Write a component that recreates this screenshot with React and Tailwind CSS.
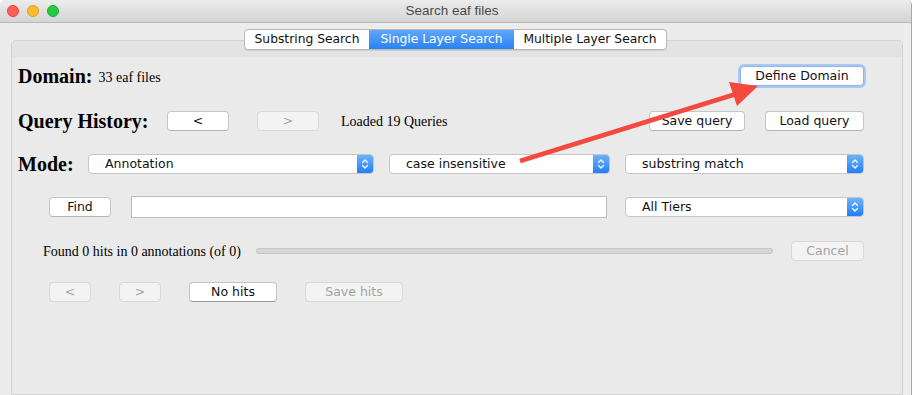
import React from 'react';

const ui = { fontFamily: '"DejaVu Sans", "Noto Sans", sans-serif' };
const serif = { fontFamily: '"Liberation Serif", "Times New Roman", serif' };

function Btn({ children, w, disabled, strong, focus, ml }) {
    let cls = 'h-[20px] flex items-center justify-center rounded-[4px] text-[12.5px] ';
    if (focus) {
        cls += 'bg-white border border-[#8fb6ec] ring-2 ring-[#a9c9f3] text-[#111]';
    } else if (disabled) {
        cls += 'bg-[#f3f3f3] border border-[#d7d7d7] text-[#a3a3a3]';
    } else if (strong) {
        cls += 'bg-white border border-[#c3c3c3] border-b-[#9d9d9d] text-[#111]';
    } else {
        cls += 'bg-white border border-[#c6c6c6] border-b-[#b5b5b5] text-[#111]';
    }
    return (
        <div className={`${cls} shrink-0`} style={{ ...ui, width: w, marginLeft: ml }}>
            {children}
        </div>
    );
}

function Chevrons() {
    return (
        <svg width="8" height="12" viewBox="0 0 8 12">
            <path d="M1.5 4.5 L4 2 L6.5 4.5" fill="none" stroke="white" strokeWidth="1.3" strokeLinecap="round" strokeLinejoin="round" />
            <path d="M1.5 7.5 L4 10 L6.5 7.5" fill="none" stroke="white" strokeWidth="1.3" strokeLinecap="round" strokeLinejoin="round" />
        </svg>
    );
}

function Select({ label, w, ml }) {
    return (
        <div
            className="h-[20px] flex items-stretch rounded-[4px] border border-[#c6c6c6] bg-white shrink-0 overflow-hidden"
            style={{ width: w, marginLeft: ml }}
        >
            <div className="flex-1 flex items-center pl-[16px] text-[12.5px] text-[#111]" style={ui}>{label}</div>
            <div className="w-[16px] flex items-center justify-center bg-gradient-to-b from-[#6cb2fb] to-[#1b7ff7]">
                <Chevrons />
            </div>
        </div>
    );
}

export default function App() {
    return (
        <div className="w-[915px] h-[395px] bg-white overflow-hidden relative">
            <div className="w-[912px] h-[395px] bg-[#ececec] border-r border-[#a8a8a8] rounded-tr-[5px] rounded-tl-[5px] flex flex-col">
                {/* title bar */}
                <div className="h-[23px] shrink-0 bg-gradient-to-b from-[#ececec] to-[#d4d4d4] border-b border-[#b9b9b9] rounded-t-[5px] flex items-center relative">
                    <div className="flex items-center gap-[8px] pl-[7px]">
                        <div className="w-[12px] h-[12px] rounded-full bg-[#fc5f57] border border-[#e0443e]" />
                        <div className="w-[12px] h-[12px] rounded-full bg-[#fdbc2e] border border-[#dea123]" />
                        <div className="w-[12px] h-[12px] rounded-full bg-[#28c840] border border-[#1aab29]" />
                    </div>
                    <div className="flex-1 text-center text-[13.5px] text-[#4a4a4a] pr-[66px]" style={{ fontFamily: '"Liberation Sans", Arial, sans-serif' }}>
                        Search eaf files
                    </div>
                </div>

                {/* tabs */}
                <div className="flex justify-center pt-[6px] relative z-10">
                    <div className="flex h-[21px] rounded-[4px] border border-[#b8b8b8] bg-white overflow-hidden text-[12.3px] shadow-[0_1px_0_#d0d0d0]" style={ui}>
                        <div className="w-[124px] flex items-center justify-center text-[#111]">Substring Search</div>
                        <div className="w-[145px] flex items-center justify-center text-white bg-gradient-to-b from-[#5ea6fa] to-[#2a81f5]">Single Layer Search</div>
                        <div className="w-[152px] flex items-center justify-center text-[#111]">Multiple Layer Search</div>
                    </div>
                </div>

                {/* tab panel */}
                <div className="ml-[11px] w-[892px] -mt-[10px] flex-1 border border-[#d3d3d3] rounded-t-[5px] bg-[#eaeaea] flex flex-col">
                    <div className="h-[16px] bg-[#e3e3e3] rounded-t-[5px] shrink-0" />
                    <div className="ml-[6px] w-[846px] flex flex-col">
                        {/* domain */}
                        <div className="h-[22px] mt-[8px] flex items-center">
                            <span className="text-[20px] font-bold text-black" style={serif}>Domain:</span>
                            <span className="text-[14px] text-black ml-[6px] mt-[2px]" style={serif}>33 eaf files</span>
                            <div className="ml-auto">
                                <Btn w={124} focus>Define Domain</Btn>
                            </div>
                        </div>

                        {/* query history */}
                        <div className="h-[22px] mt-[23px] flex items-center">
                            <span className="text-[20px] font-bold text-black w-[132px] shrink-0" style={serif}>Query History:</span>
                            <Btn w={62} ml={17}>&lt;</Btn>
                            <Btn w={62} ml={28} disabled>&gt;</Btn>
                            <span className="text-[14px] text-black ml-[22px]" style={serif}>Loaded 19 Queries</span>
                            <div className="ml-auto flex">
                                <Btn w={96}>Save query</Btn>
                                <Btn w={99} ml={20}>Load query</Btn>
                            </div>
                        </div>

                        {/* mode */}
                        <div className="h-[22px] mt-[21px] flex items-center">
                            <span className="text-[20px] font-bold text-black w-[70px] shrink-0" style={serif}>Mode:</span>
                            <Select label="Annotation" w={286} />
                            <Select label="case insensitive" w={221} ml={15} />
                            <Select label="substring match" w={239} ml={15} />
                        </div>

                        {/* find */}
                        <div className="h-[22px] mt-[21px] flex items-center">
                            <Btn w={62} ml={31}>Find</Btn>
                            <div className="w-[476px] h-[22px] ml-[20px] bg-white border border-[#bdbdbd] shrink-0" />
                            <Select label="All Tiers" w={239} ml={18} />
                        </div>

                        {/* progress */}
                        <div className="h-[22px] mt-[22px] flex items-center">
                            <span className="text-[14px] text-black ml-[25px]" style={serif}>Found 0 hits in 0 annotations (of 0)</span>
                            <div className="ml-auto w-[517px] h-[6px] rounded-full bg-[#d6d6d6] border border-[#c4c4c4]" />
                            <Btn w={73} ml={18} disabled>Cancel</Btn>
                        </div>

                        {/* hits */}
                        <div className="h-[22px] mt-[19px] flex items-center">
                            <Btn w={42} ml={31} disabled>&lt;</Btn>
                            <Btn w={42} ml={28} disabled>&gt;</Btn>
                            <Btn w={88} ml={28} strong>No hits</Btn>
                            <Btn w={98} ml={28} disabled>Save hits</Btn>
                        </div>
                    </div>
                </div>
            </div>

            {/* annotation arrow */}
            <svg className="absolute inset-0 pointer-events-none" width="915" height="395">
                <line x1="520" y1="161" x2="736" y2="94" stroke="#f3493e" strokeWidth="4.5" />
                <polygon points="758,86 729,82 737,106" fill="#f3493e" />
            </svg>
        </div>
    );
}
